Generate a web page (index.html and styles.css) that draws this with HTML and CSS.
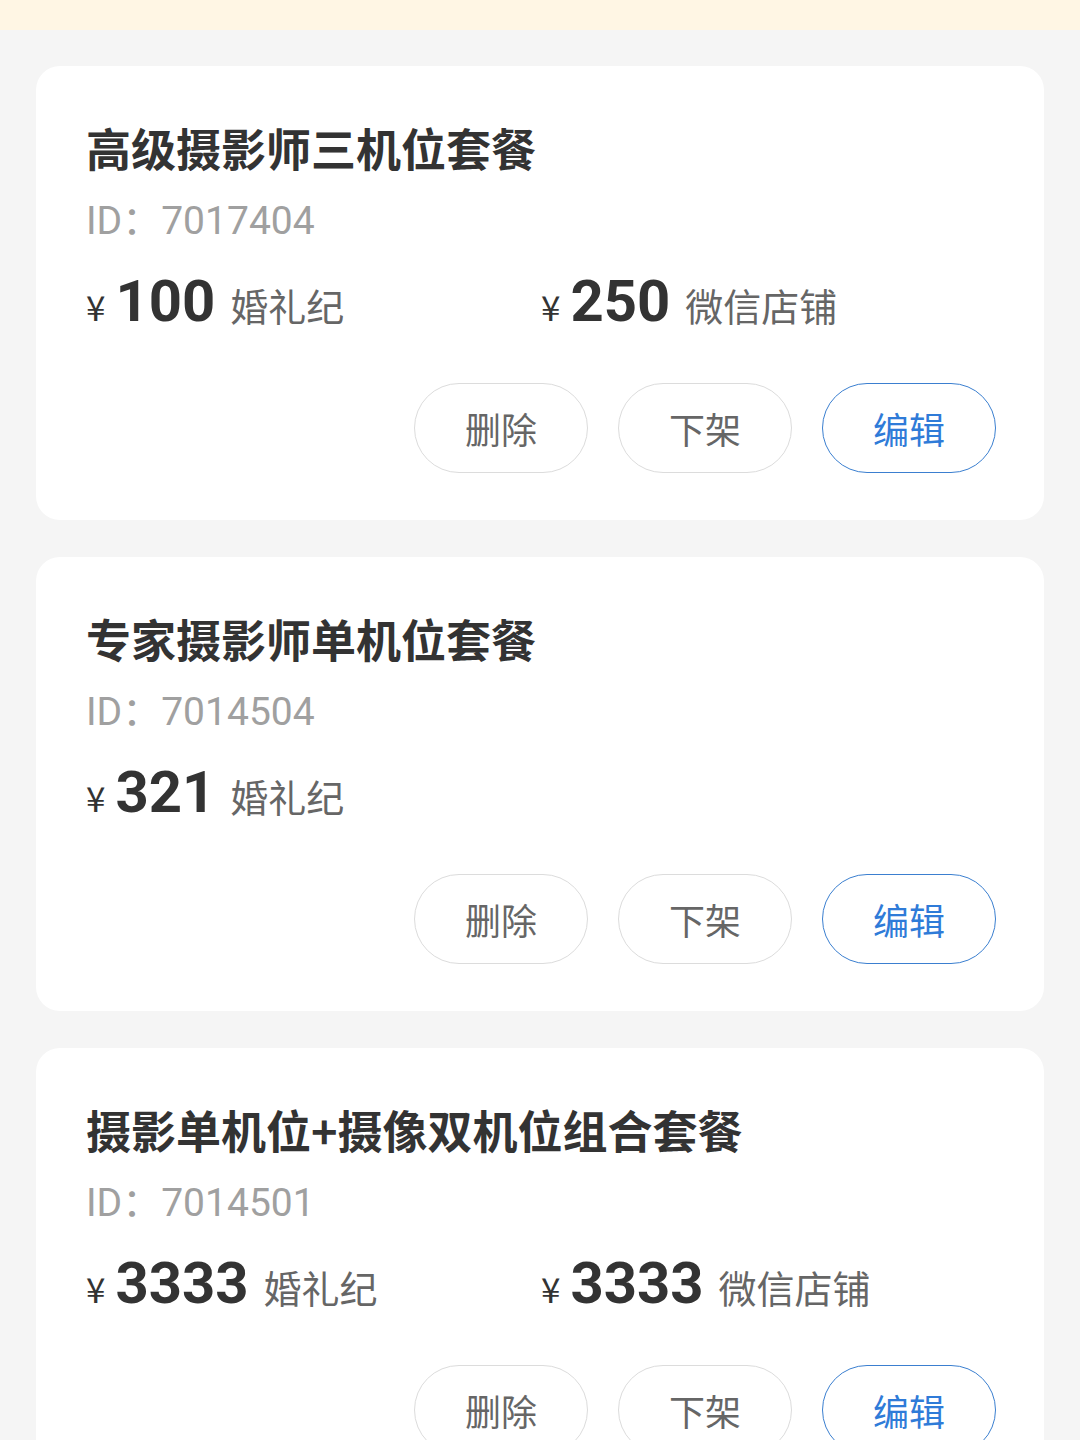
FILE: index.html
```html
<!DOCTYPE html>
<html lang="zh-CN">
<head>
    <meta charset="UTF-8">
    <meta name="viewport" content="width=device-width, initial-scale=1.0">
    <title>套餐管理</title>
    <link rel="stylesheet" href="styles.css">
</head>
<body>

<div class="notice-bar"></div>

<div class="package-list">

    <!-- 套餐 1 -->
    <div class="package-card">
        <div class="package-title">高级摄影师三机位套餐</div>
        <div class="package-id">ID：<span>7017404</span></div>
        <div class="price-row">
            <div class="price">
                <span class="yen">¥</span>
                <span class="amount">100</span>
                <span class="channel">婚礼纪</span>
            </div>
            <div class="price">
                <span class="yen">¥</span>
                <span class="amount">250</span>
                <span class="channel">微信店铺</span>
            </div>
        </div>
        <div class="action-buttons">
            <button class="btn">删除</button>
            <button class="btn">下架</button>
            <button class="btn btn-edit">编辑</button>
        </div>
    </div>

    <!-- 套餐 2 -->
    <div class="package-card">
        <div class="package-title">专家摄影师单机位套餐</div>
        <div class="package-id">ID：<span>7014504</span></div>
        <div class="price-row">
            <div class="price">
                <span class="yen">¥</span>
                <span class="amount">321</span>
                <span class="channel">婚礼纪</span>
            </div>
        </div>
        <div class="action-buttons">
            <button class="btn">删除</button>
            <button class="btn">下架</button>
            <button class="btn btn-edit">编辑</button>
        </div>
    </div>

    <!-- 套餐 3 -->
    <div class="package-card">
        <div class="package-title">摄影单机位+摄像双机位组合套餐</div>
        <div class="package-id">ID：<span>7014501</span></div>
        <div class="price-row">
            <div class="price">
                <span class="yen">¥</span>
                <span class="amount">3333</span>
                <span class="channel">婚礼纪</span>
            </div>
            <div class="price">
                <span class="yen">¥</span>
                <span class="amount">3333</span>
                <span class="channel">微信店铺</span>
            </div>
        </div>
        <div class="action-buttons">
            <button class="btn">删除</button>
            <button class="btn">下架</button>
            <button class="btn btn-edit">编辑</button>
        </div>
    </div>

</div>

</body>
</html>
```

FILE: styles.css
```css
body {
    font-family: Roboto, "Noto Sans CJK SC", sans-serif;
    margin: 0;
    padding: 0;
    background-color: #f5f5f5;
    color: #333;
}
.notice-bar {
    height: 30px;
    background-color: #fff6e4;
}
.package-list {
    padding: 36px 36px 0;
    display: flex;
    flex-direction: column;
    gap: 37px;
}
.package-card {
    background-color: #fff;
    border-radius: 24px;
    padding: 50px 48px 47px 50px;
}
.package-title {
    font-family: "Noto Sans CJK SC", sans-serif;
    font-size: 45px;
    font-weight: bold;
    line-height: 64px;
    color: #333;
}
.package-id {
    margin-top: 13px;
    font-size: 39px;
    line-height: 56px;
    color: #a0a0a0;
}
.price-row {
    margin-top: 16px;
    height: 72px;
    display: grid;
    grid-template-columns: 1fr 1fr;
}
.price {
    display: flex;
    align-items: baseline;
    line-height: 72px;
}
.yen {
    font-family: "Noto Sans CJK SC", sans-serif;
    font-size: 35px;
    color: #333;
    margin-right: 10px;
}
.amount {
    font-size: 58px;
    font-weight: bold;
    color: #333;
    margin-right: 15px;
}
.channel {
    font-family: "Noto Sans CJK SC", sans-serif;
    font-size: 38px;
    color: #666;
}
.action-buttons {
    margin-top: 46px;
    display: flex;
    justify-content: flex-end;
    gap: 30px;
}
.btn {
    width: 174px;
    height: 90px;
    border: 1.5px solid #dcdcdc;
    border-radius: 45px;
    background-color: #fff;
    font-family: "Noto Sans CJK SC", sans-serif;
    font-size: 36px;
    color: #666;
    padding: 0;
    cursor: pointer;
}
.btn-edit {
    border-color: #3b7fd0;
    color: #2f7bd8;
}
```
